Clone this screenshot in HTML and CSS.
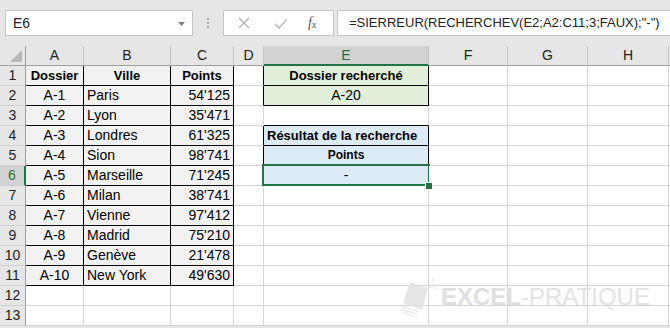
FILE: index.html
```html
<!DOCTYPE html>
<html lang="fr">
<head>
<meta charset="utf-8">
<title>Excel - SIERREUR</title>
<link rel="stylesheet" href="styles.css">
</head>
<body>
<div class="topbar">
  <div class="namebox">
    <span class="ref">E6</span>
    <svg class="drop" width="7" height="4" viewBox="0 0 7 4"><path d="M0 0H7L3.5 4Z" fill="#7a7a7a"/></svg>
  </div>
  <div class="grip"><i></i><i></i><i></i></div>
  <div class="fxbtns">
    <svg class="btn-x" width="12" height="12" viewBox="0 0 12 12"><path d="M1 1L11 11M11 1L1 11" stroke="#b3b3b3" stroke-width="1.4" fill="none"/></svg>
    <svg class="btn-ok" width="14" height="11" viewBox="0 0 14 11"><path d="M1 6L5 10L13 1" stroke="#c2c2c2" stroke-width="1.8" fill="none"/></svg>
    <span class="fx">f<sub>x</sub></span>
  </div>
  <div class="formula">=SIERREUR(RECHERCHEV(E2;A2:C11;3;FAUX);"-")</div>
</div>

<div class="sheet">
  <div class="hd corner"><svg width="12" height="12" viewBox="0 0 12 12"><path d="M12 0V12H0Z" fill="#b8b8b8"/></svg></div>
  <div class="hd col">A</div>
  <div class="hd col">B</div>
  <div class="hd col">C</div>
  <div class="hd col">D</div>
  <div class="hd col sel-col">E</div>
  <div class="hd col">F</div>
  <div class="hd col">G</div>
  <div class="hd col">H</div>
  <div class="hd col"></div>

  <div class="hd row">1</div>
  <div class="c t bold center">Dossier</div><div class="c t bold center">Ville</div><div class="c t bold center">Points</div>
  <div class="c bk-r"></div><div class="c green bk bold center">Dossier recherché</div><div class="c"></div><div class="c"></div><div class="c"></div><div class="c"></div>

  <div class="hd row">2</div>
  <div class="c t center">A-1</div><div class="c t">Paris</div><div class="c t right">54'125</div>
  <div class="c bk-r"></div><div class="c green bk center">A-20</div><div class="c"></div><div class="c"></div><div class="c"></div><div class="c"></div>

  <div class="hd row">3</div>
  <div class="c t center">A-2</div><div class="c t">Lyon</div><div class="c t right">35'471</div>
  <div class="c"></div><div class="c bk-b"></div><div class="c"></div><div class="c"></div><div class="c"></div><div class="c"></div>

  <div class="hd row">4</div>
  <div class="c t center">A-3</div><div class="c t">Londres</div><div class="c t right">61'325</div>
  <div class="c bk-r"></div><div class="c blue bk bold">Résultat de la recherche</div><div class="c"></div><div class="c"></div><div class="c"></div><div class="c"></div>

  <div class="hd row">5</div>
  <div class="c t center">A-4</div><div class="c t">Sion</div><div class="c t right">98'741</div>
  <div class="c bk-r"></div><div class="c blue bk bold center small">Points</div><div class="c"></div><div class="c"></div><div class="c"></div><div class="c"></div>

  <div class="hd row sel-row">6</div>
  <div class="c t center">A-5</div><div class="c t">Marseille</div><div class="c t right">71'245</div>
  <div class="c bk-r"></div><div class="c blue bk center active">-<span class="handle"></span></div><div class="c"></div><div class="c"></div><div class="c"></div><div class="c"></div>

  <div class="hd row">7</div>
  <div class="c t center">A-6</div><div class="c t">Milan</div><div class="c t right">38'741</div>
  <div class="c"></div><div class="c"></div><div class="c"></div><div class="c"></div><div class="c"></div><div class="c"></div>

  <div class="hd row">8</div>
  <div class="c t center">A-7</div><div class="c t">Vienne</div><div class="c t right">97'412</div>
  <div class="c"></div><div class="c"></div><div class="c"></div><div class="c"></div><div class="c"></div><div class="c"></div>

  <div class="hd row">9</div>
  <div class="c t center">A-8</div><div class="c t">Madrid</div><div class="c t right">75'210</div>
  <div class="c"></div><div class="c"></div><div class="c"></div><div class="c"></div><div class="c"></div><div class="c"></div>

  <div class="hd row">10</div>
  <div class="c t center">A-9</div><div class="c t">Genève</div><div class="c t right">21'478</div>
  <div class="c"></div><div class="c"></div><div class="c"></div><div class="c"></div><div class="c"></div><div class="c"></div>

  <div class="hd row">11</div>
  <div class="c t center">A-10</div><div class="c t">New York</div><div class="c t right">49'630</div>
  <div class="c"></div><div class="c"></div><div class="c"></div><div class="c"></div><div class="c"></div><div class="c"></div>

  <div class="hd row">12</div>
  <div class="c"></div><div class="c"></div><div class="c"></div>
  <div class="c"></div><div class="c"></div><div class="c"></div><div class="c"></div><div class="c"></div><div class="c"></div>

  <div class="hd row">13</div>
  <div class="c"></div><div class="c"></div><div class="c"></div>
  <div class="c"></div><div class="c"></div><div class="c"></div><div class="c"></div><div class="c"></div><div class="c"></div>
</div>

<div class="watermark">
  <svg class="wm-logo" width="40" height="40" viewBox="0 0 40 40">
    <path d="M11 5L29 11L23 33L4 26Z" fill="#e0e0e0"/>
    <path d="M2 29L20 35M1 32L18 37M3 35L15 39" stroke="#e0e0e0" stroke-width="1.3" fill="none"/>
    <circle cx="30" cy="5" r="1" fill="#dedede"/><circle cx="33" cy="8" r="1" fill="#dedede"/><circle cx="34" cy="3" r="1" fill="#dedede"/><circle cx="36" cy="11" r="1" fill="#dedede"/><circle cx="31" cy="10" r="0.9" fill="#dedede"/>
  </svg>
  <span class="wm-text"><b>EXCEL</b>-PRATIQUE</span>
</div>
</body>
</html>
```

FILE: styles.css
```css
html, body {
  margin: 0;
  padding: 0;
}
body {
  width: 670px;
  height: 328px;
  overflow: hidden;
  background: #ffffff;
  font-family: "Liberation Sans", Arial, sans-serif;
  color: #000;
  position: relative;
}

/* ---------- top bar ---------- */
.topbar {
  height: 46px;
  box-sizing: border-box;
  background: #e6e6e6;
  display: flex;
  align-items: flex-start;
  padding: 10px 0 0 5px;
}
.namebox {
  width: 188px;
  height: 26px;
  box-sizing: border-box;
  background: #fff;
  border: 1px solid #c6c6c6;
  display: flex;
  align-items: center;
  justify-content: space-between;
  padding: 0 7px 0 7px;
  font-size: 14px;
  color: #222;
}
.namebox .drop { margin-top: 1px; }
.grip {
  width: 30px;
  height: 26px;
  display: flex;
  flex-direction: column;
  align-items: center;
  justify-content: center;
  gap: 2px;
}
.grip i {
  display: block;
  width: 2px;
  height: 2px;
  background: #a8a8a8;
}
.fxbtns {
  width: 111px;
  height: 26px;
  box-sizing: border-box;
  background: #fff;
  border: 1px solid #c6c6c6;
  display: flex;
  align-items: center;
  padding-left: 14px;
}
.btn-x { margin-right: 24px; }
.btn-ok { margin-right: 20px; }
.fx {
  font-family: "Liberation Serif", "Times New Roman", serif;
  font-style: italic;
  font-size: 14px;
  color: #555;
}
.fx sub {
  font-size: 10px;
  vertical-align: -1px;
}
.formula {
  flex: 1;
  margin-left: 3px;
  height: 26px;
  box-sizing: border-box;
  background: #fff;
  border: 1px solid #c6c6c6;
  border-right: none;
  padding-left: 11px;
  font-size: 13px;
  line-height: 24px;
  color: #222;
  white-space: nowrap;
}

/* ---------- sheet ---------- */
.sheet {
  display: grid;
  grid-template-columns: 26px 58px 87px 63px 30px 165px 79px 80px 81px 1fr;
  grid-auto-rows: 20px;
  font-size: 14px;
  height: 282px;
  background: #e6e6e6;
}
.hd {
  background: #e6e6e6;
  box-sizing: border-box;
  color: #222;
  text-align: center;
  line-height: 19px;
  white-space: nowrap;
  overflow: hidden;
}
.hd.col {
  border-right: 1px solid #c4c4c4;
  border-bottom: 1px solid #9e9e9e;
}
.hd.corner {
  border-right: 1px solid #9e9e9e;
  border-bottom: 1px solid #9e9e9e;
  display: flex;
  align-items: flex-end;
  justify-content: flex-end;
  padding: 0 3px 3px 0;
}
.hd.corner svg { display: block; }
.hd.row {
  border-right: 1px solid #9e9e9e;
  border-bottom: 1px solid #d0d0d0;
}
.hd.sel-col {
  background: #d2d2d2;
  color: #217346;
  border-bottom: 2px solid #217346;
}
.hd.sel-row {
  background: #d2d2d2;
  color: #217346;
  border-right: 2px solid #217346;
}

.c {
  box-sizing: border-box;
  background: #fff;
  border-right: 1px solid #d4d4d4;
  border-bottom: 1px solid #d4d4d4;
  padding: 0 3px;
  line-height: 19px;
  white-space: nowrap;
  overflow: hidden;
  position: relative;
}
.c.t {
  background: #f2f2f2;
  border-right-color: #000;
  border-bottom-color: #000;
}
.c.bk-r { border-right-color: #000; }
.c.bk-b { border-bottom-color: #000; }
.c.bk {
  border-right-color: #000;
  border-bottom-color: #000;
}
.c.green { background: #e2efda; }
.c.blue { background: #ddebf7; }
.bold { font-weight: bold; font-size: 13px; }
.small { font-size: 12px; }
.center { text-align: center; }
.right { text-align: right; }

.c.active { overflow: visible; }
.c.active::after {
  content: "";
  position: absolute;
  left: -2px;
  top: -2px;
  right: -2px;
  bottom: -1px;
  border: 2px solid #217346;
  pointer-events: none;
}
.handle {
  position: absolute;
  right: -4px;
  bottom: -4px;
  width: 6px;
  height: 6px;
  background: #217346;
  outline: 1px solid #fff;
  z-index: 2;
}

/* ---------- watermark ---------- */
.watermark {
  position: absolute;
  left: 399px;
  top: 277px;
  display: flex;
  align-items: center;
  gap: 2px;
  opacity: 0.8;
  pointer-events: none;
}
.wm-logo { display: block; }
.wm-text {
  font-family: "Liberation Sans", Arial, sans-serif;
  font-size: 24px;
  color: #dcdcdc;
  font-weight: normal;
}
.wm-text b {
  font-weight: bold;
  color: #d8d8d8;
}
```
